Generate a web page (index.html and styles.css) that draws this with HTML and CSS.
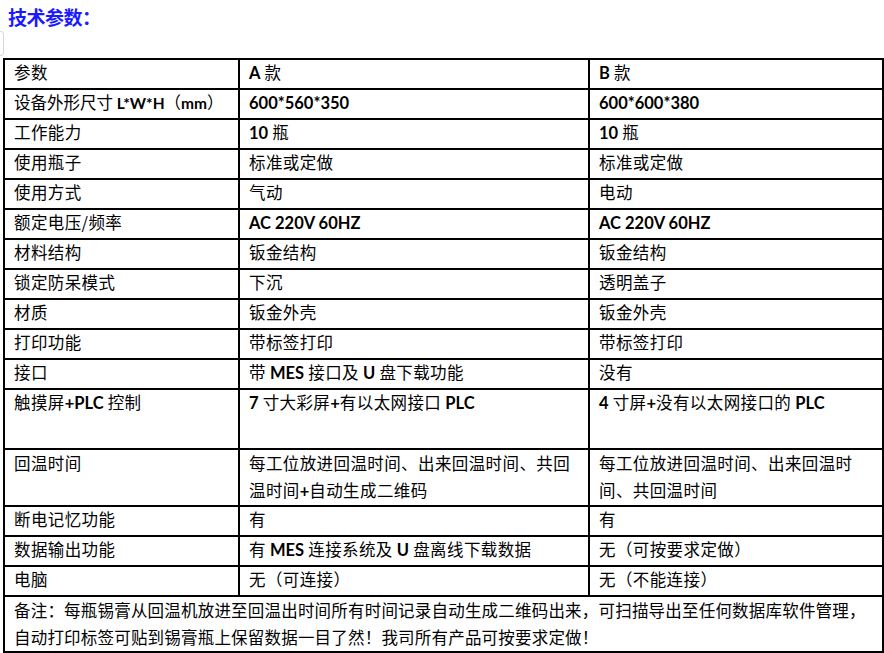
FILE: index.html
```html
<!DOCTYPE html>
<html lang="zh-CN">
<head>
<meta charset="utf-8">
<title>技术参数</title>
<link rel="stylesheet" href="styles.css">
</head>
<body>
<div class="page">
  <h1 class="title">技术参数：</h1>
  <span class="edge-mark"></span>
  <table class="spec">
    <colgroup>
      <col class="c1"><col class="c2"><col class="c3">
    </colgroup>
    <tbody>
      <tr><td>参数</td><td><b class="en">A</b> 款</td><td><b class="en">B</b> 款</td></tr>
      <tr><td class="nowrap">设备外形尺寸 <b class="en">L*W*H</b>（<b class="en">mm</b>）</td><td><b class="en">600*560*350</b></td><td><b class="en">600*600*380</b></td></tr>
      <tr><td>工作能力</td><td><b class="en">10</b> 瓶</td><td><b class="en">10</b> 瓶</td></tr>
      <tr><td>使用瓶子</td><td>标准或定做</td><td>标准或定做</td></tr>
      <tr><td>使用方式</td><td>气动</td><td>电动</td></tr>
      <tr><td>额定电压/频率</td><td><b class="en">AC 220V 60HZ</b></td><td><b class="en">AC 220V 60HZ</b></td></tr>
      <tr><td>材料结构</td><td>钣金结构</td><td>钣金结构</td></tr>
      <tr><td>锁定防呆模式</td><td>下沉</td><td>透明盖子</td></tr>
      <tr><td>材质</td><td>钣金外壳</td><td>钣金外壳</td></tr>
      <tr><td>打印功能</td><td>带标签打印</td><td>带标签打印</td></tr>
      <tr><td>接口</td><td>带 <b class="en">MES</b> 接口及 <b class="en">U</b> 盘下载功能</td><td>没有</td></tr>
      <tr class="tall"><td>触摸屏<b class="en">+PLC</b> 控制</td><td><b class="en">7</b> 寸大彩屏<b class="en">+</b>有以太网接口 <b class="en">PLC</b></td><td><b class="en">4</b> 寸屏<b class="en">+</b>没有以太网接口的 <b class="en">PLC</b></td></tr>
      <tr class="two"><td>回温时间</td><td>每工位放进回温时间、出来回温时间、共回温时间<b class="en">+</b>自动生成二维码</td><td>每工位放进回温时间、出来回温时间、共回温时间</td></tr>
      <tr><td>断电记忆功能</td><td>有</td><td>有</td></tr>
      <tr><td>数据输出功能</td><td>有 <b class="en">MES</b> 连接系统及 <b class="en">U</b> 盘离线下载数据</td><td>无（可按要求定做）</td></tr>
      <tr><td>电脑</td><td>无（可连接）</td><td>无（不能连接）</td></tr>
      <tr class="note"><td colspan="3">备注：每瓶锡膏从回温机放进至回温出时间所有时间记录自动生成二维码出来，可扫描导出至任何数据库软件管理，自动打印标签可贴到锡膏瓶上保留数据一目了然！我司所有产品可按要求定做！</td></tr>
    </tbody>
  </table>
</div>
</body>
</html>
```

FILE: styles.css
```css
html, body {
  margin: 0;
  padding: 0;
  background: #ffffff;
}

body {
  font-family: "Noto Sans CJK SC", "Noto Sans", sans-serif;
  color: #000;
}

.page {
  position: relative;
  width: 884px;
  height: 653px;
  overflow: hidden;
}

.title {
  margin: 0;
  padding: 4px 0 0 8px;
  height: 58px;
  box-sizing: border-box;
  font-size: 19px;
  line-height: 26px;
  font-weight: 700;
  letter-spacing: -0.5px;
  color: #1a1aff;
}

.edge-mark {
  position: absolute;
  left: -4px;
  top: 31px;
  width: 6px;
  height: 23px;
  border: 1px solid #d8d8d8;
  border-radius: 3px;
}

.spec {
  margin-left: 3px;
  width: 879px;
  table-layout: fixed;
  border-collapse: collapse;
  font-size: 16.5px;
}

.c1 { width: 235px; }
.c2 { width: 350px; }
.c3 { width: 294px; }

.spec td {
  border: 2px solid #000;
  height: 30px;
  box-sizing: border-box;
  padding: 0 8px 0 9px;
  line-height: 24px;
  vertical-align: top;
  letter-spacing: 0.4px;
}

.spec td.nowrap {
  white-space: nowrap;
  letter-spacing: 0;
  padding-right: 0;
}

.spec tr.tall td { height: 60px; }
.spec tr.two td { height: 54px; line-height: 27px; }
.spec tr.note td {
  height: 53px;
  line-height: 27px;
  padding: 0 6px 0 9px;
  letter-spacing: 0.2px;
}

.en {
  font-family: "Lato", "Liberation Sans", sans-serif;
  font-weight: 700;
  font-size: 16.5px;
  letter-spacing: 0;
}

.nowrap .en {
  font-size: 15.5px;
}
```
